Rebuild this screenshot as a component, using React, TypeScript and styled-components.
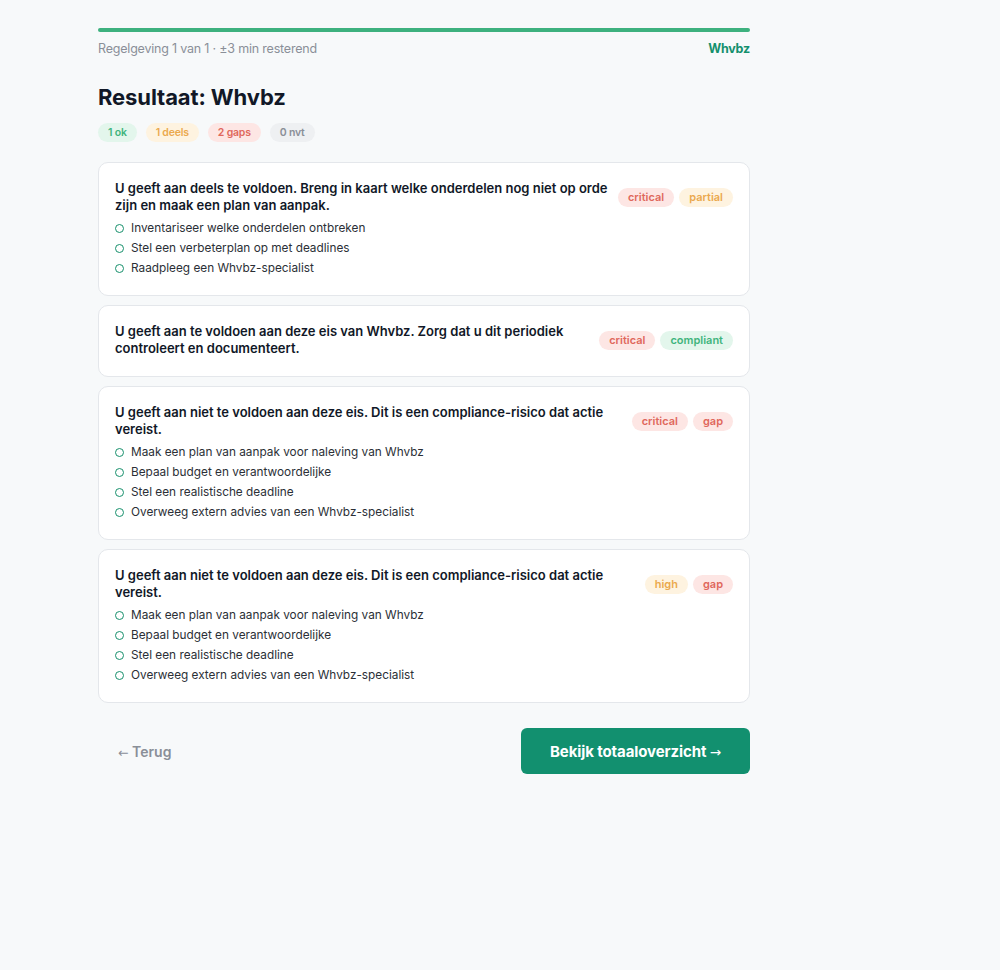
import React from "react";
import styled, { createGlobalStyle } from "styled-components";

const GlobalStyle = createGlobalStyle`
  body {
    margin: 0;
    background: #f7f9fa;
    font-family: "Inter", "Liberation Sans", sans-serif;
    color: #111827;
  }
`;

const Page = styled.div`
  width: 652px;
  padding: 28px 0 40px 98px;
`;

const Progress = styled.div`
  height: 4px;
  border-radius: 2px;
  background: #3db17e;
`;

const Meta = styled.div`
  display: flex;
  justify-content: space-between;
  align-items: center;
  margin-top: 9px;
  font-size: 12.5px;
  color: #8a8f98;
  letter-spacing: -0.2px;
  .reg {
    color: #14906d;
    font-weight: 700;
  }
`;

const Title = styled.h1`
  margin: 28px 0 0;
  font-size: 22px;
  font-weight: 700;
  letter-spacing: -0.1px;
  color: #111827;
`;

const Summary = styled.div`
  display: flex;
  gap: 9px;
  margin-top: 13px;
`;

const tones = {
  green: { bg: "#e3f6ec", fg: "#3fb47d" },
  orange: { bg: "#fef3e0", fg: "#eba94e" },
  red: { bg: "#fde6e4", fg: "#e0685c" },
  gray: { bg: "#eef0f2", fg: "#8a8f98" },
};

type Tone = keyof typeof tones;

const Pill = styled.span<{ $tone: Tone }>`
  display: inline-flex;
  align-items: center;
  height: 19px;
  padding: 0 10px;
  border-radius: 10px;
  font-size: 10.5px;
  font-weight: 600;
  letter-spacing: -0.2px;
  background: ${(p) => tones[p.$tone].bg};
  color: ${(p) => tones[p.$tone].fg};
`;

const Tag = styled(Pill)`
  font-size: 11px;
  letter-spacing: 0;
`;

const Cards = styled.div`
  display: flex;
  flex-direction: column;
  gap: 9px;
  margin-top: 20px;
`;

const Card = styled.div`
  background: #fff;
  border: 1px solid #e4e7eb;
  border-radius: 10px;
  padding: 17px 16px 19px;
`;

const CardHead = styled.div`
  display: flex;
  align-items: center;
  gap: 10px;
`;

const CardText = styled.div`
  flex: 1;
  font-size: 13px;
  font-weight: 600;
  line-height: 17px;
  color: #111827;
`;

const Tags = styled.div`
  display: flex;
  gap: 5px;
  flex-shrink: 0;
`;

const Steps = styled.ul`
  list-style: none;
  margin: 6px 0 0;
  padding: 0;
  display: flex;
  flex-direction: column;
  gap: 4px;
`;

const Step = styled.li`
  display: flex;
  align-items: center;
  gap: 7px;
  height: 16px;
  font-size: 11.8px;
  color: #2b2f36;
`;

const Ring = styled.span`
  width: 7px;
  height: 7px;
  border: 1.2px solid #17906c;
  border-radius: 50%;
  flex-shrink: 0;
`;

const Footer = styled.div`
  display: flex;
  justify-content: space-between;
  align-items: center;
  margin-top: 25px;
`;

const Arrow = styled.span`
  font-family: "DejaVu Sans", sans-serif;
  font-weight: 400;
  font-size: 0.9em;
`;

const BackButton = styled.button`
  background: none;
  border: none;
  padding: 0 0 0 20px;
  font-family: inherit;
  font-size: 14px;
  font-weight: 600;
  color: #8a8f98;
  cursor: pointer;
`;

const NextButton = styled.button`
  height: 46px;
  width: 229px;
  border: none;
  border-radius: 6px;
  background: #12906f;
  color: #fff;
  font-family: inherit;
  font-size: 15px;
  font-weight: 700;
  letter-spacing: -0.1px;
  cursor: pointer;
`;

type Item = {
  text: string;
  tags: { label: string; tone: Tone }[];
  steps: string[];
};

const gapSteps = [
  "Maak een plan van aanpak voor naleving van Whvbz",
  "Bepaal budget en verantwoordelijke",
  "Stel een realistische deadline",
  "Overweeg extern advies van een Whvbz-specialist",
];

const items: Item[] = [
  {
    text: "U geeft aan deels te voldoen. Breng in kaart welke onderdelen nog niet op orde zijn en maak een plan van aanpak.",
    tags: [
      { label: "critical", tone: "red" },
      { label: "partial", tone: "orange" },
    ],
    steps: [
      "Inventariseer welke onderdelen ontbreken",
      "Stel een verbeterplan op met deadlines",
      "Raadpleeg een Whvbz-specialist",
    ],
  },
  {
    text: "U geeft aan te voldoen aan deze eis van Whvbz. Zorg dat u dit periodiek controleert en documenteert.",
    tags: [
      { label: "critical", tone: "red" },
      { label: "compliant", tone: "green" },
    ],
    steps: [],
  },
  {
    text: "U geeft aan niet te voldoen aan deze eis. Dit is een compliance-risico dat actie vereist.",
    tags: [
      { label: "critical", tone: "red" },
      { label: "gap", tone: "red" },
    ],
    steps: gapSteps,
  },
  {
    text: "U geeft aan niet te voldoen aan deze eis. Dit is een compliance-risico dat actie vereist.",
    tags: [
      { label: "high", tone: "orange" },
      { label: "gap", tone: "red" },
    ],
    steps: gapSteps,
  },
];

export default function App() {
  return (
    <>
      <GlobalStyle />
      <Page>
        <Progress />
        <Meta>
          <span>Regelgeving 1 van 1 · ±3 min resterend</span>
          <span className="reg">Whvbz</span>
        </Meta>
        <Title>Resultaat: Whvbz</Title>
        <Summary>
          <Pill $tone="green">1 ok</Pill>
          <Pill $tone="orange">1 deels</Pill>
          <Pill $tone="red">2 gaps</Pill>
          <Pill $tone="gray">0 nvt</Pill>
        </Summary>
        <Cards>
          {items.map((item, i) => (
            <Card key={i}>
              <CardHead>
                <CardText>{item.text}</CardText>
                <Tags>
                  {item.tags.map((t) => (
                    <Tag key={t.label} $tone={t.tone}>
                      {t.label}
                    </Tag>
                  ))}
                </Tags>
              </CardHead>
              {item.steps.length > 0 && (
                <Steps>
                  {item.steps.map((s) => (
                    <Step key={s}>
                      <Ring />
                      {s}
                    </Step>
                  ))}
                </Steps>
              )}
            </Card>
          ))}
        </Cards>
        <Footer>
          <BackButton>
            <Arrow>←</Arrow> Terug
          </BackButton>
          <NextButton>
            Bekijk totaaloverzicht <Arrow>→</Arrow>
          </NextButton>
        </Footer>
      </Page>
    </>
  );
}
